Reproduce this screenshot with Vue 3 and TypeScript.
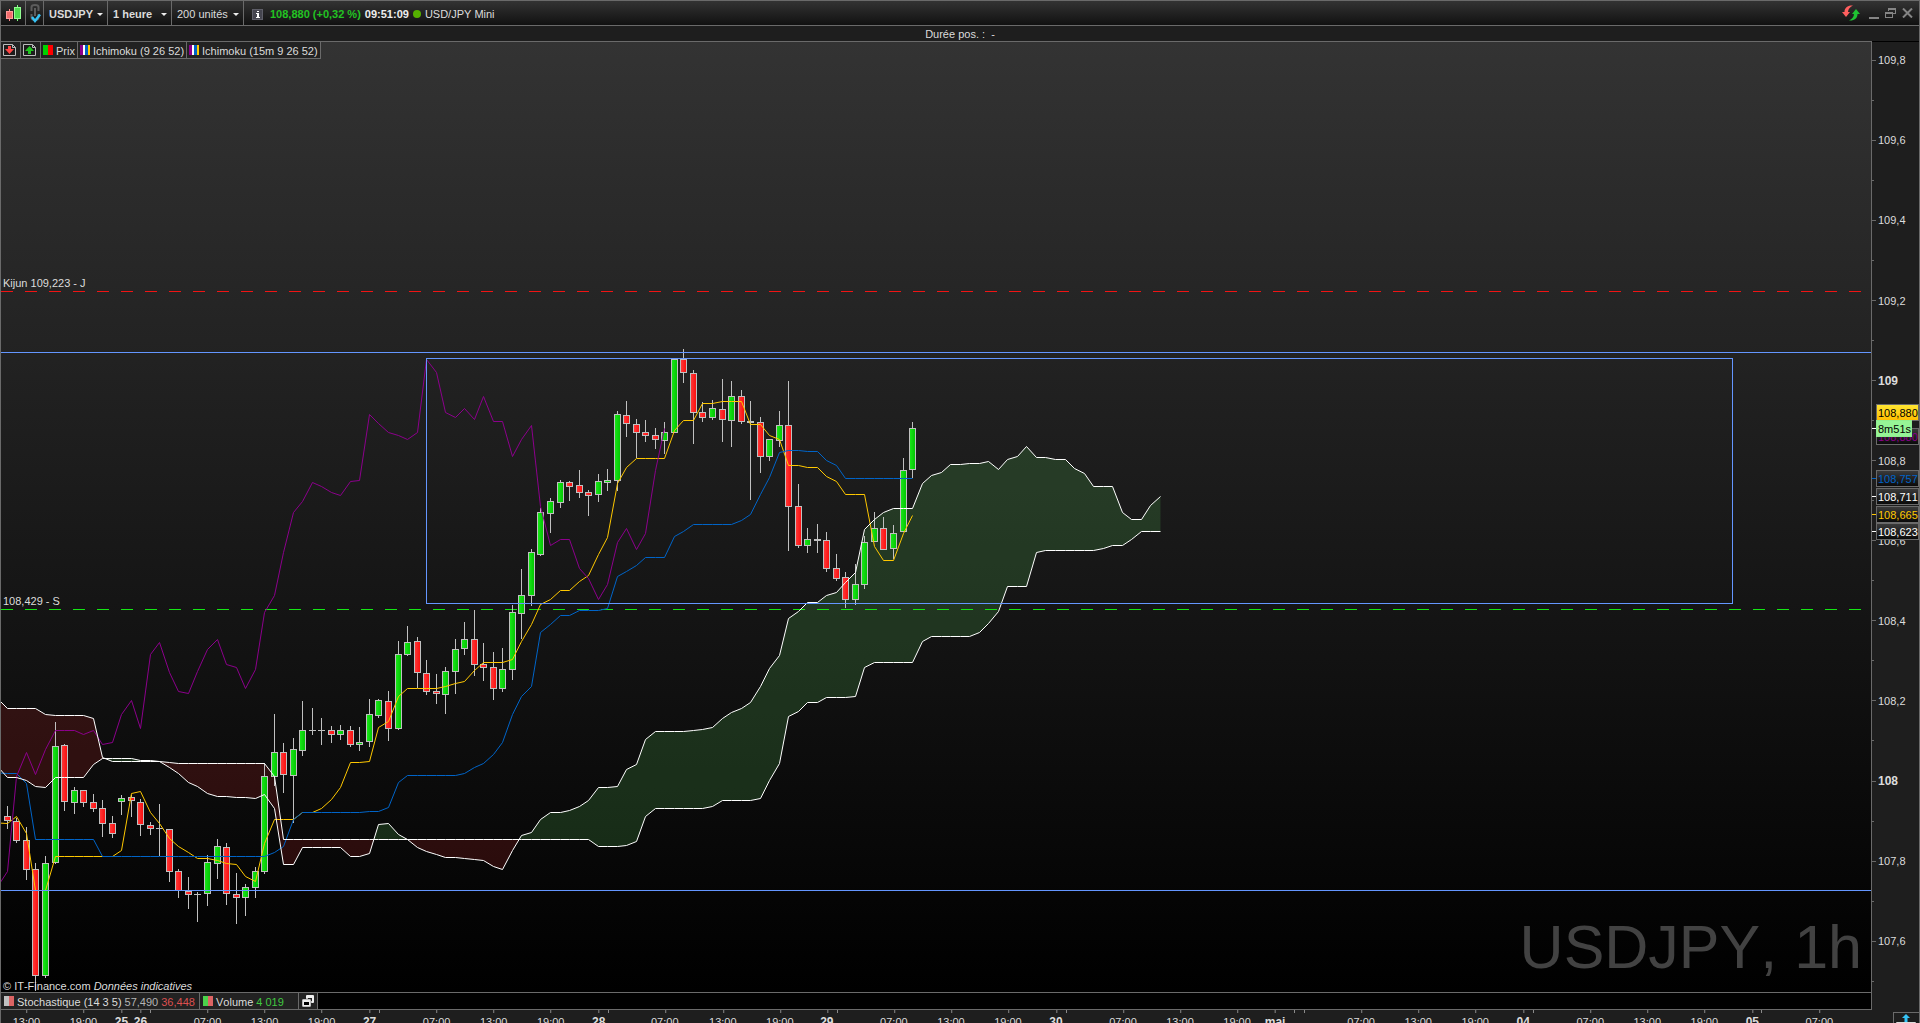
<script setup lang="ts">
import { computed, ref } from 'vue'

type Candle = [high: number, top: number, bottom: number, low: number, kind: 'g' | 'r' | 'd']
type Point = [number, number]

const VIEW = { x: 1, y: 42, w: 1870, h: 950 }

const symbol = ref('USDJPY')
const period = ref('1 heure')
const units = ref('200 unités')

const candles: Candle[] = [
  [806, 816, 821, 829, 'r'], [818, 821, 841, 843, 'r'], [827, 840, 870, 880, 'r'], [863, 869, 976, 991, 'r'],
  [856, 863, 976, 978, 'g'], [722, 746, 863, 864, 'g'], [744, 745, 802, 811, 'r'], [787, 790, 803, 814, 'g'],
  [790, 790, 803, 807, 'r'], [794, 802, 809, 812, 'r'], [800, 808, 824, 837, 'r'], [816, 823, 834, 838, 'r'],
  [795, 798, 802, 815, 'g'], [795, 797, 801, 817, 'r'], [799, 802, 825, 836, 'r'], [822, 825, 829, 835, 'r'],
  [804, 828, 829, 856, 'd'], [829, 829, 872, 882, 'r'], [869, 871, 891, 898, 'r'], [877, 891, 895, 909, 'r'],
  [892, 894, 895, 922, 'd'], [855, 862, 894, 906, 'g'], [839, 846, 864, 879, 'g'], [843, 847, 894, 905, 'r'],
  [873, 894, 898, 924, 'r'], [884, 887, 898, 916, 'g'], [867, 871, 888, 898, 'g'], [763, 776, 872, 874, 'g'],
  [714, 752, 777, 786, 'g'], [743, 752, 775, 793, 'r'], [738, 749, 776, 823, 'g'], [701, 730, 751, 756, 'g'],
  [708, 730, 731, 735, 'd'], [718, 730, 731, 745, 'd'], [726, 730, 735, 743, 'r'], [725, 730, 735, 740, 'g'],
  [726, 730, 745, 747, 'r'], [727, 742, 745, 751, 'g'], [699, 714, 742, 747, 'g'], [699, 700, 716, 718, 'g'],
  [691, 701, 729, 741, 'r'], [641, 654, 729, 730, 'g'], [626, 642, 655, 656, 'g'], [637, 641, 673, 688, 'r'],
  [660, 673, 692, 695, 'r'], [674, 691, 694, 704, 'r'], [667, 671, 695, 714, 'g'], [639, 649, 672, 694, 'g'],
  [622, 639, 649, 655, 'g'], [610, 639, 665, 676, 'r'], [643, 664, 668, 681, 'r'], [652, 667, 689, 700, 'r'],
  [648, 669, 689, 692, 'g'], [605, 612, 670, 680, 'g'], [569, 595, 614, 639, 'g'], [549, 552, 596, 606, 'g'],
  [508, 512, 555, 556, 'g'], [498, 501, 514, 533, 'g'], [480, 482, 503, 508, 'g'], [481, 482, 487, 501, 'r'],
  [470, 485, 493, 498, 'r'], [490, 492, 496, 516, 'r'], [474, 481, 495, 502, 'g'], [469, 480, 483, 491, 'g'],
  [411, 414, 481, 491, 'g'], [401, 415, 424, 437, 'r'], [419, 424, 433, 458, 'r'], [420, 432, 436, 442, 'r'],
  [428, 435, 440, 449, 'r'], [422, 432, 441, 454, 'g'], [358, 359, 433, 433, 'g'], [349, 359, 373, 383, 'r'],
  [370, 373, 413, 444, 'r'], [402, 412, 418, 422, 'r'], [400, 408, 418, 420, 'g'], [379, 409, 420, 442, 'r'],
  [381, 396, 421, 447, 'g'], [390, 396, 422, 424, 'r'], [401, 421, 423, 500, 'd'], [417, 422, 457, 473, 'r'],
  [439, 439, 457, 461, 'g'], [411, 425, 441, 447, 'g'], [381, 425, 507, 551, 'r'], [484, 506, 546, 548, 'r'],
  [528, 539, 546, 553, 'g'], [524, 539, 541, 553, 'd'], [532, 540, 569, 572, 'r'], [554, 568, 579, 581, 'r'],
  [572, 577, 600, 608, 'r'], [564, 584, 600, 605, 'g'], [536, 542, 585, 589, 'g'], [512, 528, 542, 542, 'g'],
  [517, 528, 550, 550, 'r'], [525, 533, 549, 559, 'g'], [458, 470, 532, 532, 'g'], [422, 428, 470, 478, 'g'],
]

const col = (i: number) => Math.floor(7.4 + 9.528 * i)

// Middle of the high/low range over the last n bars
function middle(i: number, n: number): number {
  const part = candles.slice(Math.max(0, i - n + 1), i + 1)
  return (Math.min(...part.map(c => c[0])) + Math.max(...part.map(c => c[3]))) / 2
}

const tenkanSeed = [823, 816, 833, 890, 890, 856, 856, 856]
const kijunSeed = [773, 773, 783, 839, 839, 839, 839, 839, 839, 839]
const spanASeed = [
  777, 777, 780, 786, 787, 777, 777, 777, 777, 764, 758, 758, 758, 758, 760, 760, 761, 767, 773, 782, 786, 793, 796,
  796, 797, 797,
]
const spanBSeed = [
  708, 708, 708, 708, 714, 715, 715, 715, 715, 718, 757, 761, 761, 761, 761, 761, 761, 762,
  ...Array<number>(10).fill(763), 776, ...Array<number>(33).fill(839), 846, 846, 846, 845, 841, 816,
  ...Array<number>(6).fill(808), 806, 800, 800,
]

const tenkan = candles.map((_, i) => tenkanSeed[i] ?? middle(i, 9))
const kijun = candles.map((_, i) => kijunSeed[i] ?? middle(i, 26))
const spanA = [...spanASeed, ...tenkan.map((t, i) => (t + kijun[i]) / 2)]
const spanB = [...spanBSeed, ...candles.map((_, i) => middle(i, 52)).slice(spanBSeed.length - 26)]
const chikou = candles.slice(26).map(c => (c[4] === 'r' ? c[2] - 1 : c[1]))

const toPoints = (values: number[], before: number): Point[] => [
  [-2, before],
  ...values.map((v, i): Point => [col(i) + 0.5, Math.floor(v) + 0.5]),
]
const text = (points: Point[]) => points.map(p => p.join(',')).join(' ')

const pointsA = toPoints(spanA, 767)
const pointsB = toPoints(spanB, 699)

const lines = {
  tenkan: text(toPoints(tenkan, 823)),
  kijun: text(toPoints(kijun, 773)),
  chikou: text(toPoints(chikou, 886)),
  spanA: text(pointsA),
  spanB: text(pointsB),
}

// Cloud polygons, split where the two spans cross
const clouds = computed(() => {
  const out: { up: boolean; points: string }[] = []
  let a: Point[] = [pointsA[0]]
  let b: Point[] = [pointsB[0]]
  let up = pointsA[0][1] < pointsB[0][1]
  const close = () => out.push({ up, points: text([...a, ...[...b].reverse()]) })
  for (let i = 1; i < pointsA.length; i++) {
    const d0 = pointsB[i - 1][1] - pointsA[i - 1][1]
    const d1 = pointsB[i][1] - pointsA[i][1]
    const nowUp = d1 > 0
    if (nowUp !== up) {
      const t = d0 === d1 ? 0 : d0 / (d0 - d1)
      const cross: Point = [
        pointsA[i - 1][0] + t * (pointsA[i][0] - pointsA[i - 1][0]),
        pointsA[i - 1][1] + t * (pointsA[i][1] - pointsA[i - 1][1]),
      ]
      a.push(cross)
      b.push(cross)
      close()
      a = [cross]
      b = [cross]
      up = nowUp
    }
    a.push(pointsA[i])
    b.push(pointsB[i])
  }
  close()
  return out
})

const topOf = (y: number) => ({ top: ((y - VIEW.y) / VIEW.h) * 100 + '%' })
const leftOf = (x: number) => ({ left: ((x - VIEW.x) / VIEW.w) * 100 + '%' })

const prices = Array.from({ length: 24 }, (_, k) => {
  const value = 109.8 - k * 0.1
  const major = k % 2 === 0
  const whole = Math.abs(value - Math.round(value)) < 0.01
  return {
    y: 60.3 + k * 40.04,
    major,
    whole,
    label: major ? (whole ? String(Math.round(value)) : value.toFixed(1).replace('.', ',')) : '',
  }
}).filter(p => p.y < 990)

const tags = [
  { y: 436, label: '108,880', kind: 'purple' },
  { y: 412, label: '108,880', kind: 'last' },
  { y: 428, label: '8m51s', kind: 'timer' },
  { y: 478, label: '108,757', kind: 'blue' },
  { y: 496, label: '108,711', kind: 'white' },
  { y: 514, label: '108,665', kind: 'yellow' },
  { y: 531, label: '108,623', kind: 'white' },
]
const marks = [
  { y: 428, kind: 'white' },
  { y: 478, kind: 'blue' },
  { y: 496, kind: 'white' },
  { y: 514, kind: 'yellow' },
  { y: 531, kind: 'white' },
]

const times: [number, string][] = [
  [26, '13:00'], [83, '19:00'], [121, '25'], [140, '26'], [150, ''], [207, '07:00'], [264, '13:00'], [321, '19:00'],
  [369, '27'], [378, ''], [436, '07:00'], [493, '13:00'], [550, '19:00'], [598, '28'], [607, ''], [664, '07:00'],
  [722, '13:00'], [779, '19:00'], [826, '29'], [836, ''], [893, '07:00'], [950, '13:00'], [1007, '19:00'],
  [1055, '30'], [1065, ''], [1122, '07:00'], [1179, '13:00'], [1236, '19:00'], [1274, 'mai'], [1293, ''],
  [1303, ''], [1360, '07:00'], [1417, '13:00'], [1474, '19:00'], [1522, '04'], [1532, ''], [1589, '07:00'],
  [1646, '13:00'], [1703, '19:00'], [1751, '05'], [1760, ''], [1818, '07:00'],
]
</script>

<template>
  <div class="app">
    <header class="bar">
      <button class="cell candle-cell" aria-label="Type de graphique">
        <svg width="18" height="18" viewBox="0 0 18 18" shape-rendering="crispEdges">
          <path d="M5.5 5v12" stroke="#ff8a8a" /><rect x="2.500" y="7.500" width="6" height="7" fill="#f26d6d" stroke="#ff9c9c" />
          <path d="M13.500 1v16" stroke="#7dff7d" /><rect x="10.500" y="3.500" width="6" height="11" fill="#4fdc4f" stroke="#93ff93" />
        </svg>
      </button>
      <button class="cell link-cell" aria-label="Lier les fenêtres">
        <svg width="14" height="20" viewBox="0 0 14 20" fill="none">
          <path d="M3.500 8V4q0-2 3.500-2t3.500 2v4" stroke="#5c5c5c" stroke-width="2" />
          <path d="M7 5v8" stroke="#5c5c5c" stroke-width="2" />
          <path d="M3.500 11v3q0 3 3.500 3t3.500-3v-3" stroke="#5c5c5c" stroke-width="2" />
          <path d="M4 14l3 4L12 11.500" stroke="#35c3f5" stroke-width="2.400" />
        </svg>
      </button>
      <label class="cell field bold">
        <select v-model="symbol" aria-label="Instrument"><option>USDJPY</option><option>EURUSD</option></select>
        <i class="caret"></i>
      </label>
      <label class="cell field bold">
        <select v-model="period" aria-label="Période"><option>1 heure</option><option>4 heures</option></select>
        <i class="caret"></i>
      </label>
      <label class="cell field wide">
        <select v-model="units" aria-label="Unités"><option>200 unités</option><option>500 unités</option></select>
        <i class="caret"></i>
      </label>
      <div class="quote">
        <button class="info" aria-label="Informations">
          <svg width="11" height="11" viewBox="0 0 11 11" shape-rendering="crispEdges">
            <rect x="0.500" y="0.500" width="10" height="10" fill="#45454f" stroke="#5e5e68" />
            <path d="M5 2h2v1H5zM4 4h3v4h1v1H4V8h1V5H4z" fill="#fff" />
          </svg>
        </button>
        <strong class="up">108,880 (+0,32 %)</strong>
        <strong class="clock">09:51:09</strong>
        <i class="dot"></i>
        <span>USD/JPY Mini</span>
      </div>
      <div class="window">
        <button aria-label="Actualiser">
          <svg width="18" height="16" viewBox="0 0 18 16">
            <path d="M11 .500C6 0 2.500 2.500 2.500 7H0l4 5 4-5H6c0-3 2-5 5-6.500z" fill="#ff5f5f" />
            <path d="M7 15.500c5 .500 8.500-2 8.500-6.500H18l-4-5-4 5h2c0 3-2 5-5 6.500z" fill="#1fc232" />
          </svg>
        </button>
        <button aria-label="Réduire">
          <svg width="10" height="12" viewBox="0 0 10 12"><path d="M0 10h10v2H0z" fill="#858585" /></svg>
        </button>
        <button aria-label="Restaurer">
          <svg width="11" height="10" viewBox="0 0 11 10" fill="none" stroke="#858585" shape-rendering="crispEdges">
            <path d="M3.500 3V.500h7v5H8M3 1.500h8M.500 4.500h7v5h-7zM0 5.500h8" />
          </svg>
        </button>
        <button aria-label="Fermer">
          <svg width="11" height="10" viewBox="0 0 11 10"><path d="M1 .500l9 9M10 .500l-9 9" stroke="#858585" stroke-width="2" /></svg>
        </button>
      </div>
    </header>

    <div class="status">Durée pos. : &nbsp;-</div>

    <main class="workspace">
      <section class="left">
        <div class="plot">
          <svg class="drawing" viewBox="1 42 1870 950" preserveAspectRatio="none">
            <defs>
              <linearGradient id="bull"><stop offset="0" stop-color="#1ce81c" /><stop offset="1" stop-color="#00c400" /></linearGradient>
              <linearGradient id="bear"><stop offset="0" stop-color="#ff3c3c" /><stop offset="1" stop-color="#fa0c0c" /></linearGradient>
            </defs>
            <polygon v-for="(c, i) in clouds" :key="'k' + i" :points="c.points" :class="c.up ? 'cloud-up' : 'cloud-down'" />
            <path class="dash kijun-day" d="M1 291.500H1871" />
            <path class="dash support" d="M1 609.500H1871" />
            <g v-for="(c, i) in candles" :key="i" class="candle">
              <path :d="`M${col(i) + 0.5} ${c[0]}V${c[3]}`" />
              <path v-if="c[4] === 'd'" :d="`M${col(i) - 3} ${(c[1] + c[2]) / 2}h7`" :stroke-width="c[2] - c[1]" />
              <rect v-else :x="col(i) - 2.5" :y="c[1] + 0.5" width="6" :height="c[2] - c[1] - 1" :fill="c[4] === 'g' ? 'url(#bull)' : 'url(#bear)'" />
            </g>
            <polyline class="line tenkan" :points="lines.tenkan" />
            <polyline class="line kijun" :points="lines.kijun" />
            <polyline class="line chikou" :points="lines.chikou" />
            <polyline class="line span" :points="lines.spanA" />
            <polyline class="line span" :points="lines.spanB" />
            <path class="guide" d="M1 352.500H1871M1 890.500H1871" />
            <rect class="guide" x="426.500" y="358.500" width="1306" height="245" />
          </svg>
          <nav class="legend">
            <button class="tab icon" aria-label="Vendre">
              <svg width="13" height="12" viewBox="0 0 13 12"><path d="M.500.500h9l3 3v8H.500z" fill="#1c1c1c" stroke="#bdbdbd" /><path d="M9.500.500v3h3" fill="none" stroke="#bdbdbd" /><path d="M5 2h3v3h3l-4.500 5L2 5h3z" fill="#f44" /></svg>
            </button>
            <button class="tab icon" aria-label="Acheter">
              <svg width="13" height="12" viewBox="0 0 13 12"><path d="M.500.500h9l3 3v8H.500z" fill="#1c1c1c" stroke="#bdbdbd" /><path d="M9.500.500v3h3" fill="none" stroke="#bdbdbd" /><path d="M5 10h3V7h3L6.500 2 2 7h3z" fill="#1fc41f" /></svg>
            </button>
            <button class="tab"><i class="swatch bars"></i>Prix</button>
            <button class="tab"><i class="swatch ichi"></i>Ichimoku (9 26 52)</button>
            <button class="tab"><i class="swatch ichi"></i>Ichimoku (15m 9 26 52)</button>
          </nav>
          <span class="note" :style="topOf(283)">Kijun 109,223 - J</span>
          <span class="note" :style="topOf(601)">108,429 - S</span>
          <div class="watermark">USDJPY, 1h</div>
          <div class="credit">© IT-Finance.com <em>Données indicatives</em></div>
        </div>
        <nav class="panels">
          <button class="tab stochastic"><i class="swatch stoch"></i>Stochastique (14 3 5)<span class="grey">57,490</span><span class="red">36,448</span></button>
          <button class="tab volume"><i class="swatch vol"></i>Volume<span class="green">4 019</span></button>
          <button class="tab restore" aria-label="Détacher">
            <svg width="12" height="12" viewBox="0 0 12 12"><rect x="4" y="0" width="8" height="8" rx="1" fill="#eee" /><path d="M6 3h4v3H6z" fill="#222" /><rect x="0" y="4" width="9" height="8" rx="1" fill="#eee" stroke="#222" stroke-width=".500" /><path d="M2 7h5v3H2z" fill="#000" /></svg>
          </button>
        </nav>
        <div class="time-axis">
          <div v-for="([x, label], i) in times" :key="i" class="time" :class="{ day: label && !label.includes(':') }" :style="leftOf(x + 0.4)">
            <i></i>{{ label }}
          </div>
        </div>
      </section>
      <aside class="price-axis">
        <div class="scale">
          <div v-for="p in prices" :key="p.y" class="price" :class="{ minor: !p.major, whole: p.whole }" :style="topOf(p.y)">
            <i></i>{{ p.label }}
          </div>
          <i v-for="m in marks" :key="m.y" class="mark" :class="m.kind" :style="topOf(m.y)"></i>
          <div v-for="t in tags" :key="t.y" class="tag" :class="t.kind" :style="topOf(t.y)">{{ t.label }}</div>
        </div>
        <div class="corner">
          <button aria-label="Agrandir">
            <svg width="20" height="18" viewBox="0 0 20 18"><path d="M10 0l4 4h-2.500v4h-3V4H6z" fill="#35c3f5" /><path d="M.500 8.500h19v9H.500z" fill="#000" stroke="#ddd" /></svg>
          </button>
        </div>
      </aside>
    </main>
  </div>
</template>

<style>
html,
body {
  margin: 0;
  background: #1e1e1e;
}
</style>

<style scoped>
.app {
  box-sizing: border-box;
  display: flex;
  flex-direction: column;
  height: 100vh;
  overflow: hidden;
  border: 1px solid #6a6a6a;
  border-bottom: 0;
  background: #1e1e1e;
  color: #dcdcdc;
  font: 11px/16px 'Liberation Sans', Arial, sans-serif;
  font-kerning: none;
}
button,
select {
  margin: 0;
  padding: 0;
  border: 0;
  background: none;
  color: inherit;
  font: inherit;
}
svg {
  display: block;
}
.bar {
  display: flex;
  flex: none;
  height: 24px;
  border-bottom: 1px solid #6a6a6a;
  background: linear-gradient(#333, #111);
}
.cell {
  box-sizing: border-box;
  display: flex;
  align-items: center;
  justify-content: center;
  border-right: 1px solid #6a6a6a;
}
.candle-cell {
  width: 25px;
}
.link-cell {
  width: 18px;
}
.field {
  justify-content: space-between;
  width: 64px;
  padding: 2px 4px 0 5px;
}
.field.wide {
  width: 72px;
}
.field select {
  flex: 1;
  min-width: 0;
  appearance: none;
  outline: 0;
}
.bold {
  font-weight: bold;
}
.caret {
  flex: none;
  border: 3px solid transparent;
  border-top-color: #eee;
  border-bottom: 0;
}
.quote {
  display: flex;
  flex: 1;
  align-items: center;
  gap: 4px;
  padding: 2px 0 0 8px;
}
.info {
  margin-right: 3px;
}
.up {
  color: #22c322;
}
.clock {
  color: #eee;
}
.dot {
  width: 8px;
  height: 8px;
  border-radius: 50%;
  background: #55b000;
}
.window {
  display: flex;
  align-items: center;
  gap: 6px;
  padding-right: 6px;
}
.window button:first-child {
  margin-right: 3px;
}
.status {
  flex: none;
  height: 15px;
  text-align: center;
}
.workspace {
  display: flex;
  flex: 1;
  min-height: 0;
}
.left {
  display: flex;
  flex: 1;
  flex-direction: column;
  min-width: 0;
}
.plot {
  position: relative;
  flex: 1;
  min-height: 0;
  border: 1px solid #6a6a6a;
  border-left: 0;
  background: linear-gradient(#333, #000);
}
.drawing {
  position: absolute;
  width: 100%;
  height: 100%;
}
.cloud-up {
  fill: rgba(70, 150, 70, 0.26);
}
.cloud-down {
  fill: rgba(160, 28, 28, 0.24);
}
.dash {
  stroke-dasharray: 12 12;
}
.kijun-day {
  stroke: #f01414;
}
.support {
  stroke: #14e614;
}
.candle {
  stroke: #c0c0c0;
}
.line {
  fill: none;
}
.tenkan {
  stroke: #ffc800;
}
.kijun {
  stroke: #0064c8;
}
.chikou {
  stroke: #8c008c;
}
.span {
  stroke: #fff;
}
.guide {
  fill: none;
  stroke: #6496ff;
}
.legend {
  position: relative;
  display: flex;
  width: max-content;
  height: 16px;
  border-bottom: 1px solid #6a6a6a;
}
.tab {
  box-sizing: border-box;
  display: flex;
  align-items: center;
  gap: 3px;
  padding: 2px 2px 0;
  border-right: 1px solid #6a6a6a;
  background: #222;
  line-height: 14px;
  white-space: nowrap;
}
.tab.icon {
  width: 20px;
  padding-top: 0;
}
.swatch {
  flex: none;
  width: 10px;
  height: 10px;
  margin-top: -2px;
}
.bars {
  background: linear-gradient(90deg, #00d200 50%, #f00 50%);
}
.ichi {
  background: linear-gradient(90deg, #8c008c 30%, #fff 30% 50%, #0064c8 50% 80%, #ffc800 80%);
}
.stoch {
  background: linear-gradient(90deg, #c0c0c0 50%, #dc6464 50%);
}
.vol {
  background: linear-gradient(90deg, #4bd24b 50%, #dc6464 50%);
}
.note {
  position: absolute;
  left: 2px;
  transform: translateY(-50%);
}
.watermark {
  position: absolute;
  right: 9px;
  bottom: 10px;
  color: #424242;
  font-size: 61px;
  line-height: 70px;
}
.credit {
  position: absolute;
  bottom: -2px;
  left: 2px;
}
.panels {
  display: flex;
  flex: none;
  height: 16px;
  border-right: 1px solid #6a6a6a;
  border-bottom: 1px solid #6a6a6a;
  background: #000;
}
.stochastic {
  min-width: 199px;
  padding-left: 3px;
}
.volume {
  width: 99px;
  padding-left: 3px;
}
.restore {
  width: 19px;
  padding: 0 3px;
}
.grey {
  color: #b4b4b4;
}
.red {
  color: #dc5050;
}
.green {
  color: #41c841;
}
.time-axis {
  position: relative;
  flex: none;
  height: 13px;
}
.time {
  position: absolute;
  top: 0;
  padding-top: 5px;
  transform: translateX(-50%);
  line-height: 14px;
}
.time i {
  position: absolute;
  top: 0;
  left: 50%;
  width: 1px;
  height: 3px;
  background: #8a8a8a;
}
.day {
  font-size: 12px;
  font-weight: bold;
}
.price-axis {
  display: flex;
  flex: none;
  flex-direction: column;
  width: 47px;
  border-top: 1px solid #000;
}
.scale {
  position: relative;
  flex: 1;
}
.price {
  position: absolute;
  left: 0;
  display: flex;
  align-items: center;
  gap: 2px;
  height: 16px;
  margin-top: -8px;
}
.price i {
  width: 4px;
  height: 1px;
  background: #6a6a6a;
}
.minor i {
  width: 2px;
}
.whole {
  font-size: 12px;
  font-weight: bold;
}
.mark {
  position: absolute;
  left: 0;
  width: 4px;
  height: 1px;
  background: currentColor;
}
.tag {
  position: absolute;
  left: 4px;
  box-sizing: border-box;
  height: 17px;
  margin-top: -8px;
  padding: 1px 0 0 1px;
  width: 43px;
  border: 1px solid #6a6a6a;
  background: linear-gradient(#3a3a3a, #0a0a0a);
  line-height: 15px;
  white-space: nowrap;
}
.white {
  color: #fff;
}
.blue {
  color: #0064c8;
}
.yellow {
  color: #ffc800;
}
.purple {
  color: #8c008c;
}
.last {
  background: linear-gradient(#ffe632, #ffbe00);
  color: #000;
}
.timer {
  width: 36px;
  border-color: #90ee90;
  background: #96f596;
  color: #000;
}
.corner {
  display: flex;
  flex: none;
  justify-content: flex-end;
  height: 11px;
  padding-top: 20px;
  overflow: hidden;
}
.corner button {
  box-sizing: border-box;
  flex: none;
  width: 26px;
  height: 20px;
  padding: 1px 2px 0;
  border: 1px solid #6a6a6a;
  border-right: 0;
}
</style>
